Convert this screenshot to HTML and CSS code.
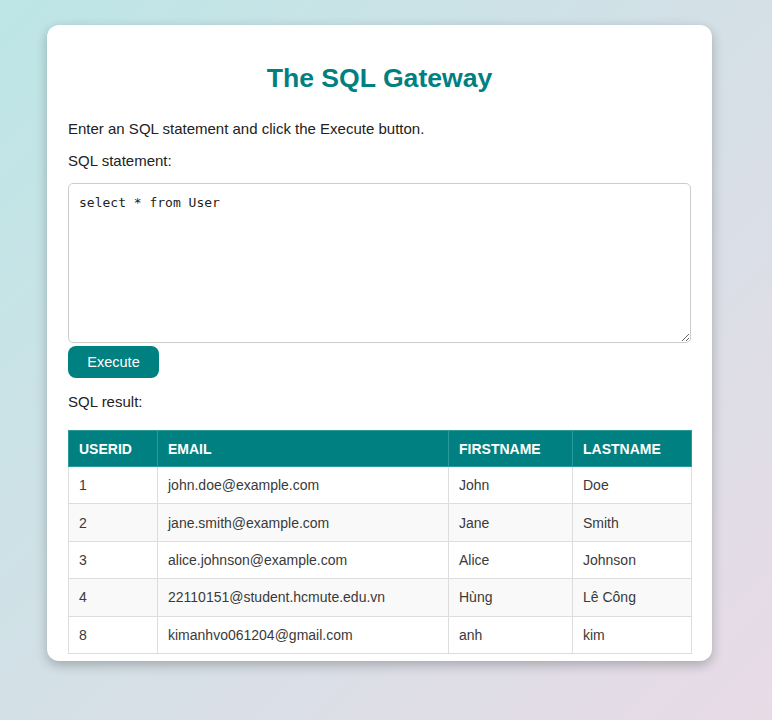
FILE: index.html
```html
<!DOCTYPE html>
<html lang="en">
<head>
<meta charset="utf-8">
<title>The SQL Gateway</title>
<link rel="stylesheet" href="styles.css">
</head>
<body>
<main class="card">
  <h1 class="title">The SQL Gateway</h1>
  <p class="text">Enter an SQL statement and click the Execute button.</p>
  <p class="text label">SQL statement:</p>
  <form class="form">
    <textarea class="sql" rows="8">select * from User</textarea>
    <button type="button" class="btn">Execute</button>
  </form>
  <p class="text result-label">SQL result:</p>
  <table class="result">
    <colgroup>
      <col class="c1"><col class="c2"><col class="c3"><col class="c4">
    </colgroup>
    <thead>
      <tr><th>USERID</th><th>EMAIL</th><th>FIRSTNAME</th><th>LASTNAME</th></tr>
    </thead>
    <tbody>
      <tr><td>1</td><td>john.doe@example.com</td><td>John</td><td>Doe</td></tr>
      <tr><td>2</td><td>jane.smith@example.com</td><td>Jane</td><td>Smith</td></tr>
      <tr><td>3</td><td>alice.johnson@example.com</td><td>Alice</td><td>Johnson</td></tr>
      <tr><td>4</td><td>22110151@student.hcmute.edu.vn</td><td>Hùng</td><td>Lê Công</td></tr>
      <tr><td>8</td><td>kimanhvo061204@gmail.com</td><td>anh</td><td>kim</td></tr>
    </tbody>
  </table>
</main>
</body>
</html>
```
FILE: styles.css
```css
html, body {
  margin: 0;
  padding: 0;
}
body {
  min-height: 720px;
  background: linear-gradient(135deg, #bde6e6 0%, #d4e0e6 50%, #e8dbe6 100%);
  font-family: "Liberation Sans", Arial, sans-serif;
  color: #222;
  padding: 25px 0 0 47px;
  box-sizing: border-box;
}
.card {
  width: 665px;
  box-sizing: border-box;
  background: #fff;
  border-radius: 12px;
  box-shadow: 0 4px 12px rgba(0, 0, 0, 0.25);
  padding: 38px 21px 8px;
  height: 636px;
}
.title {
  margin: 0 0 26px;
  text-align: center;
  color: #008080;
  font-size: 26.6px;
  font-weight: bold;
  line-height: 30px;
}
.text {
  margin: 0 0 12px;
  font-size: 15px;
  line-height: 20px;
}
.label {
  margin-bottom: 12px;
}
.form {
  display: flex;
  flex-direction: column;
  align-items: flex-start;
  gap: 3px;
}
.sql {
  width: 100%;
  box-sizing: border-box;
  height: 160px;
  border: 1px solid #ccc;
  border-radius: 5px;
  padding: 10px;
  font-family: "DejaVu Sans Mono", monospace;
  font-size: 13px;
  line-height: 18px;
  color: #222;
  resize: vertical;
}
.btn {
  background: #008080;
  color: #fff;
  border: none;
  border-radius: 8px;
  width: 91px;
  height: 32px;
  font-family: "Liberation Sans", Arial, sans-serif;
  font-size: 14.5px;
  padding: 0;
}
.result-label {
  margin: 14px 0 18px;
}
.result {
  width: 100%;
  border-collapse: collapse;
  table-layout: fixed;
  font-size: 14px;
}
.c1 { width: 89px; }
.c2 { width: 291px; }
.c3 { width: 124px; }
.c4 { width: 119px; }
.result th {
  background: #008080;
  color: #fff;
  font-size: 14px;
  font-weight: bold;
  text-align: left;
  padding: 0 10px;
  height: 35px;
  border: 1px solid #2a9a9a;
}
.result td {
  border: 1px solid #ddd;
  padding: 0 10px;
  height: 36.4px;
  color: #3a3a3a;
}
.result tbody tr:nth-child(even) {
  background: #f9f9f9;
}
```
